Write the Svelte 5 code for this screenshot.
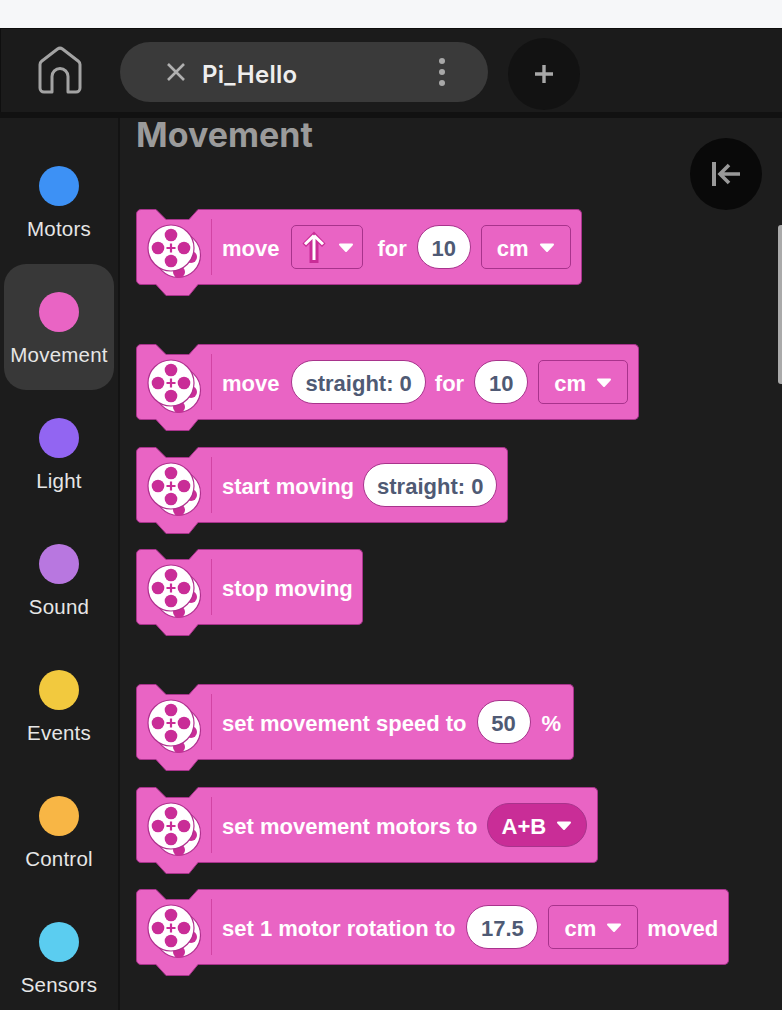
<script>
  const cats = [
    { name: 'Motors', color: '#3d91f5' },
    { name: 'Movement', color: '#e964c4', active: true },
    { name: 'Light', color: '#9265f2' },
    { name: 'Sound', color: '#b877e0' },
    { name: 'Events', color: '#f2c93e' },
    { name: 'Control', color: '#f8b645' },
    { name: 'Sensors', color: '#5bcdf0' }
  ];
  const blocks = [
    { parts: [['t','move',0,'tight'],['arrow'],['t','for',4],['p','10'],['d','cm']] },
    { group: true, parts: [['t','move',0,'tight'],['p','straight: 0'],['t','for',-1],['p','10'],['d','cm']] },
    { parts: [['t','start moving',0,'shrink'],['p','straight: 0']] },
    { parts: [['t','stop moving',0,'shrink']] },
    { group: true, parts: [['t','set movement speed to'],['p','50'],['t','%',1],['g']] },
    { parts: [['t','set movement motors to',0,'tight'],['m','A+B']] },
    { parts: [['t','set 1 motor rotation to',0,'near'],['p','17.5','wide'],['d','cm'],['t','moved',-1]] }
  ];
</script>

{#snippet caret()}
  <svg class="caret" width="16" height="10" viewBox="0 0 16 10"><path d="M2 1.500h12L8 8z" fill="#fff" stroke="#fff" stroke-width="2" stroke-linejoin="round"/></svg>
{/snippet}

<div class="page">
  <div class="topbar"></div>
  <header class="header">
    <svg class="home" width="46" height="48" viewBox="0 0 46 48" fill="none"><path d="M3 18.500q0-2 1.600-3.200L20.500 3q2.500-1.800 5 0l15.900 12.300q1.600 1.200 1.600 3.200V42a4 4 0 0 1-4 4H31V30.500a8 8 0 0 0-16 0V46H7a4 4 0 0 1-4-4z" stroke="#a3a3a3" stroke-width="3" stroke-linejoin="round"/></svg>
    <div class="tab">
      <svg width="20" height="20" viewBox="0 0 20 20" fill="none"><path d="M2 2l16 16M18 2L2 18" stroke="#b0b0b0" stroke-width="2.600"/></svg>
      <span class="tabname">Pi_Hello</span>
      <svg class="dots" width="8" height="30" viewBox="0 0 8 30" fill="#a8a8a8"><circle cx="4" cy="4" r="3"/><circle cx="4" cy="15" r="3"/><circle cx="4" cy="26" r="3"/></svg>
    </div>
    <div class="plus">
      <svg width="20" height="20" viewBox="0 0 20 20"><path d="M10 1v18M1 10h18" stroke="#a8a8a8" stroke-width="3.400"/></svg>
    </div>
  </header>
  <div class="main">
    <nav class="side">
      {#each cats as c}
        <div class="cat" class:active={c.active}>
          <span class="dot" style="background:{c.color}"></span>
          <span>{c.name}</span>
        </div>
      {/each}
    </nav>
    <section class="content">
      <h1>Movement</h1>
      <div class="blocks">
        {#each blocks as b}
          <div class="block" class:group={b.group}>
            <svg class="lead" width="77" height="88" viewBox="0 0 77 88">
              <path d="M5 .5H20l10 10h23l9-10H77V75.500H62l-9 11H30l-10-11H5A4.500 4.500 0 0 1 .5 71V5A4.500 4.500 0 0 1 5 .5z" fill="#e964c4" stroke="#a8338c"/>
              <path d="M77 1.500v73" stroke="#e964c4" stroke-width="2"/>
              <circle cx="42" cy="46" r="22.500" fill="#fff" stroke="#b0308f" stroke-width="1.200"/>
              <g fill="#c92d97"><circle cx="55" cy="48" r="6"/><circle cx="43" cy="63" r="6"/></g>
              <circle cx="35" cy="39" r="23" fill="#fff" stroke="#b0308f" stroke-width="1.200"/>
              <g fill="#c92d97">
                <circle cx="35" cy="26" r="6.300"/><circle cx="35" cy="52" r="6.300"/><circle cx="22" cy="39" r="6.300"/><circle cx="48" cy="39" r="6.300"/>
              </g>
              <path d="M35 34.500v9M30.500 39h9" stroke="#c92d97" stroke-width="2.200"/>
              <path d="M76 10v56" stroke="#c4308f" stroke-width="1.200"/>
            </svg>
            <div class="body">
              {#each b.parts as p}
                {#if p[0] === 't'}
                  <span class="txt" class:tight={p[3] === 'tight'} class:near={p[3] === 'near'} class:shrink={p[3] === 'shrink'} style={p[2] ? `margin-left:${p[2]}px` : undefined}>{p[1]}</span>
                {:else if p[0] === 'p'}
                  <span class="pill" class:wide={p[2] === 'wide'}>{p[1]}</span>
                {:else if p[0] === 'd'}
                  <span class="drop">{p[1]}{@render caret()}</span>
                {:else if p[0] === 'm'}
                  <span class="motor">{p[1]}{@render caret()}</span>
                {:else if p[0] === 'g'}
                  <span class="endgap"></span>
                {:else}
                  <span class="drop arrowdrop">
                    <svg width="24" height="33" viewBox="0 0 24 33"><path d="M12 .5 23.500 12.500l-3.500 3.500-3.500-3.500V32h-9V12.500L4 16 .5 12.500z" fill="#c92d97"/><path d="M12 4.500 21 13.300M12 4.500 3 13.300M12 4.500V29" stroke="#fff" stroke-width="3" fill="none"/></svg>
                    {@render caret()}
                  </span>
                {/if}
              {/each}
            </div>
          </div>
        {/each}
      </div>
    </section>
    <button class="collapse" aria-label="collapse">
      <svg width="30" height="26" viewBox="0 0 30 26" fill="none"><path d="M3 1v24" stroke="#999" stroke-width="4"/><path d="M29 13H10M18 4l-9 9 9 9" stroke="#999" stroke-width="3.600"/></svg>
    </button>
    <div class="scroll"></div>
  </div>
</div>

<style>
  :global(body) { margin: 0; background: #1d1d1d; }
  .page { width: 782px; height: 1010px; overflow: hidden; display: flex; flex-direction: column; font-family: "Liberation Sans", Arial, sans-serif; }
  .topbar { height: 28px; background: #f6f7f9; flex: none; }
  .header { height: 84px; flex: none; box-sizing: border-box; background: #1b1b1b; border-top: 1px solid #0d0d0d; border-left: 1px solid #0f0f0f; display: flex; align-items: center; padding-left: 36px; }
  .home { margin-right: 37px; margin-top: -2px; }
  .tab { width: 368px; height: 60px; margin-top: 2px; border-radius: 30px; background: #3a3a3a; display: flex; align-items: center; padding-left: 46px; box-sizing: border-box; }
  .tabname { margin-left: 16px; color: #eee; font: 600 24px "Inter", sans-serif; letter-spacing: .3px; padding-top: 5px; }
  .dots { margin-left: auto; margin-right: 42px; }
  .plus { margin-left: 20px; margin-top: 6px; width: 72px; height: 72px; border-radius: 50%; background: #121212; display: grid; place-items: center; }
  .main { flex: 1; position: relative; display: flex; border-top: 6px solid #111; min-height: 0; }
  .side { width: 120px; flex: none; box-sizing: border-box; padding: 20px 4px 0; border-right: 2px solid #131313; background: #1c1c1c; display: flex; flex-direction: column; }
  .cat { height: 126px; flex: none; border-radius: 22px; display: flex; flex-direction: column; align-items: center; color: #e6e6e6; font-size: 20.500px; letter-spacing: .2px; padding-top: 28px; box-sizing: border-box; gap: 11px; }
  .cat.active { background: #383838; }
  .dot { width: 40px; height: 40px; border-radius: 50%; }
  .content { flex: 1; padding-left: 16px; background: #1d1d1d; }
  h1 { margin: 0; font: 700 34px/34px "Inter", sans-serif; color: #9b9b9b; }
  .blocks { display: flex; flex-direction: column; margin-top: 57px; }
  .block { display: flex; align-items: flex-start; height: 76.500px; margin-bottom: 26px; }
  .block.group { margin-top: 32.500px; }
  .lead { flex: none; margin-right: -1px; display: block; }
  .body { height: 76px; box-sizing: border-box; display: flex; align-items: center; gap: 10px; padding: 0 10px; background: #e964c4; border: 1px solid #a8338c; border-left: 0; border-radius: 0 5px 5px 0; }
  .txt { color: #fff; font-size: 22px; font-weight: 700; white-space: nowrap; padding-top: 4px; }
  .txt.tight { margin-right: 2px; }
  .txt.near { margin-right: 1px; }
  .txt.shrink { margin-right: -1px; }
  .endgap { width: 0; margin-left: -8px; }
  .pill { height: 44px; min-width: 54px; box-sizing: border-box; padding: 4px 13px 0; border-radius: 22px; background: #fff; border: 1px solid #a8338c; color: #4f5a74; font-size: 22px; font-weight: 700; display: flex; align-items: center; justify-content: center; white-space: nowrap; }
  .pill.wide { min-width: 72px; }
  .drop { height: 44px; box-sizing: border-box; border: 1px solid #a8338c; border-radius: 5px; padding: 4px 15px 0; display: flex; align-items: center; gap: 10px; color: #fff; font-size: 22px; font-weight: 700; white-space: nowrap; }
  .motor { height: 44px; margin-left: -3px; box-sizing: border-box; border: 1px solid #a8338c; border-radius: 22px; background: #c92d97; padding: 4px 14px 0; display: flex; align-items: center; gap: 10px; color: #fff; font-size: 22px; font-weight: 700; white-space: nowrap; }
  .arrowdrop { width: 72px; padding: 0 8px 0 10px; justify-content: space-between; }
  .caret { flex: none; margin-top: -2px; }
  .arrowdrop .caret { margin-top: 2px; }
  .collapse { position: absolute; left: 690px; top: 20px; width: 72px; height: 72px; border-radius: 50%; border: 0; padding: 0; background: #090909; display: grid; place-items: center; }
  .scroll { position: absolute; right: 0; top: 107px; width: 4px; height: 159px; background: #aaa; border-radius: 3px 0 0 3px; }
</style>
